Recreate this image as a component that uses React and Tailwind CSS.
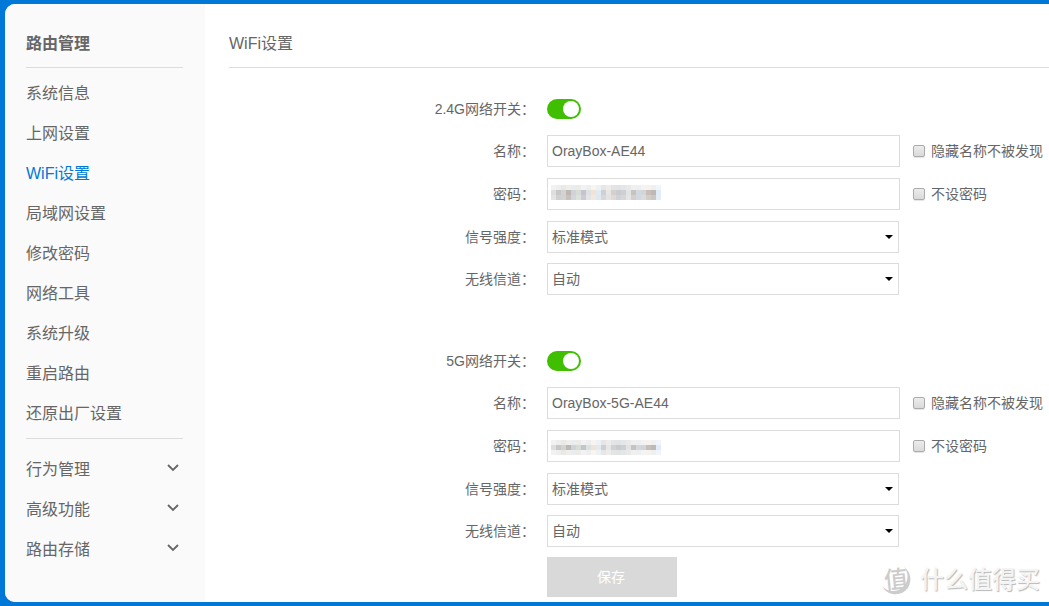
import { useState } from "react";

const menu = ["系统信息", "上网设置", "WiFi设置", "局域网设置", "修改密码", "网络工具", "系统升级", "重启路由", "还原出厂设置"];
const groups = ["行为管理", "高级功能", "路由存储"];

const light = ["#f2f2f2", "#eeeeee", "#e9e9e6", "#eeeeee", "#e9edee", "#ebece9", "#f3f2f3", "#eeeeee", "#f8f4f0", "#eef2f6", "#e6e6e7", "#ececec", "#e4e4e5", "#e2e3e4", "#e4e6e8", "#eae9e9", "#eef1f4", "#efefef", "#f4f3f2", "#f5f3f1", "#f0f0f0", "#eff5fb"];
const upper = ["#dedede", "#c6c7c8", "#d3d4d0", "#beb7b4", "#cdd3d6", "#d6dcd6", "#c5c4ce", "#dfe0e2", "#f1e3d8", "#e2eaf1", "#ced0d4", "#e6e6e5", "#d5d0cc", "#c8ccd0", "#cdd0d3", "#e1e3e4", "#cbc2bf", "#d0d9df", "#d3d5d6", "#c8bfb9", "#bfb9b5", "#e0ecf8"];
const lower = ["#e4e4e4", "#cfd0d0", "#d3d4d0", "#c6c1be", "#d3d7d9", "#dde1dc", "#cccbd3", "#e3e4e5", "#f3e8df", "#dfe8f0", "#d6d7da", "#e3e3e3", "#dedad7", "#d0d3d6", "#d5d7d9", "#e4e5e6", "#d5cecb", "#d0d9df", "#d9dbdc", "#d3ccc7", "#ccc7c3", "#e3edf8"];

function Mosaic({ rows, className }) {
  return (
    <svg className={`pointer-events-none absolute left-1 w-[110px] ${className}`} viewBox={`0 0 110 ${rows.length * 5}`} shapeRendering="crispEdges" aria-hidden="true">
      {rows.map((row, y) => row.map((c, x) => <rect key={`${x}-${y}`} x={x * 5} y={y * 5} width="5" height="5" fill={c} />))}
    </svg>
  );
}

function Row({ label, id, className = "", children, side }) {
  return (
    <div className={`flex items-center gap-3 ${className}`}>
      <label htmlFor={id} className="w-[306px] shrink-0 text-right">{label}：</label>
      <div className="flex min-w-0 flex-1">
        <div className="relative min-w-0 flex-1">{children}</div>
        <div className="flex w-[149px] shrink-0 items-center pl-[13px]">{side}</div>
      </div>
    </div>
  );
}

function Check({ children }) {
  return (
    <label className="flex items-center gap-[6px] whitespace-nowrap">
      <input type="checkbox" className="size-3 appearance-none rounded-[2px] border border-[#ababab] bg-linear-to-b from-[#ececec] to-[#dadada] shadow-[0_1px_1px_#e4e4e4] checked:bg-[#0078d7]" />
      {children}
    </label>
  );
}

function Select({ id, options }) {
  return (
    <div className="relative mr-px">
      <select id={id} className="h-8 w-full appearance-none border border-[#dcdcdc] bg-white px-1">
        {options.map((o) => <option key={o}>{o}</option>)}
      </select>
      <svg className="pointer-events-none absolute top-[14px] right-[6px] h-1 w-2" viewBox="0 0 8 4" aria-hidden="true">
        <path d="M0 0h8L4 4z" fill="#000" />
      </svg>
    </div>
  );
}

function Network({ prefix, id, name, mask }) {
  const [on, setOn] = useState(true);
  return (
    <section>
      <Row label={`${prefix}网络开关`} id={`${id}-on`} className="h-5">
        <span className="relative block h-5 w-[34px]">
          <input id={`${id}-on`} type="checkbox" role="switch" checked={on} onChange={() => setOn(!on)} className="peer block h-5 w-[34px] appearance-none rounded-full bg-[#cccccc] checked:bg-[#3fbf00]" />
          <span className="pointer-events-none absolute top-[2px] left-[2px] size-4 rounded-full bg-white peer-checked:left-4" />
        </span>
      </Row>
      <Row label="名称" id={`${id}-name`} className="mt-4" side={<Check>隐藏名称不被发现</Check>}>
        <input id={`${id}-name`} defaultValue={name} className="block h-8 w-full border border-[#dcdcdc] bg-white px-1" />
      </Row>
      <Row label="密码" id={`${id}-password`} className="mt-[11px]" side={<Check>不设密码</Check>}>
        <input id={`${id}-password`} type="password" className="block h-8 w-full border border-[#dcdcdc] bg-white px-1" />
        {mask}
      </Row>
      <Row label="信号强度" id={`${id}-power`} className="mt-[11px]">
        <Select id={`${id}-power`} options={["标准模式"]} />
      </Row>
      <Row label="无线信道" id={`${id}-channel`} className="mt-[10px]">
        <Select id={`${id}-channel`} options={["自动"]} />
      </Row>
    </section>
  );
}

export default function App() {
  return (
    <div className="min-h-screen bg-[#0078d7] py-1 pl-[5px] font-['Liberation_Sans','Noto_Sans_CJK_SC',sans-serif] text-sm text-[#666666]">
      <div className="relative flex overflow-hidden rounded-l-[10px] bg-white">
        <aside className="w-[200px] shrink-0 bg-[#fafafa] pr-[22px] pl-[21px] text-base">
          <h1 className="border-b border-[#dcdcdc] pt-7 pb-[11px] leading-6 font-bold">路由管理</h1>
          <nav>
            <ul className="border-b border-[#dcdcdc] pt-[6px] pb-1">
              {menu.map((m) => (
                <li key={m}>
                  <a href="#" className={`block leading-10 ${m === "WiFi设置" ? "text-[#0078d7]" : ""}`}>{m}</a>
                </li>
              ))}
            </ul>
            <ul className="pt-[11px]">
              {groups.map((g) => (
                <li key={g}>
                  <button type="button" className="flex h-10 w-full items-center justify-between pr-1">
                    {g}
                    <svg className="mb-1 h-2 w-3" viewBox="0 0 12 8" fill="none" stroke="#666666" strokeWidth="1.8" aria-hidden="true">
                      <path d="M1 1l5 5 5-5" />
                    </svg>
                  </button>
                </li>
              ))}
            </ul>
          </nav>
        </aside>
        <main className="min-w-0 flex-1 pb-[5px] pl-6">
          <h2 className="border-b border-[#dcdcdc] pt-7 pb-[11px] text-base leading-6">WiFi设置</h2>
          <form className="pt-[31px]">
            <Network prefix="2.4G" id="g2" name="OrayBox-AE44" mask={<Mosaic rows={[light, upper, lower]} className="top-[7px] h-[15px]" />} />
            <div className="h-14" />
            <Network prefix="5G" id="g5" name="OrayBox-5G-AE44" mask={<Mosaic rows={[light, upper, light]} className="top-[10px] h-[15px]" />} />
            <button type="button" className="mt-[10px] ml-[318px] block h-10 w-[130px] bg-[#d9d9d9] pr-[2px] text-white">保存</button>
          </form>
        </main>
        <div className="pointer-events-none absolute right-[9px] bottom-1 flex items-center gap-2 text-2xl leading-9 font-medium">
          <span className="relative flex size-8 items-center justify-center text-[#cccccc]">
            <span className="-rotate-6">值</span>
            <svg className="absolute inset-0 size-8" viewBox="0 0 32 32" fill="#cccccc" aria-hidden="true">
              <path d="M24 3A15 15 0 1 1 2 22A14.500 14.500 0 1 0 24 3Z" />
            </svg>
          </span>
          <span className="text-[#f4f4f4] [text-shadow:1px_1px_1px_#b8b8b8]">什么值得买</span>
        </div>
      </div>
    </div>
  );
}
